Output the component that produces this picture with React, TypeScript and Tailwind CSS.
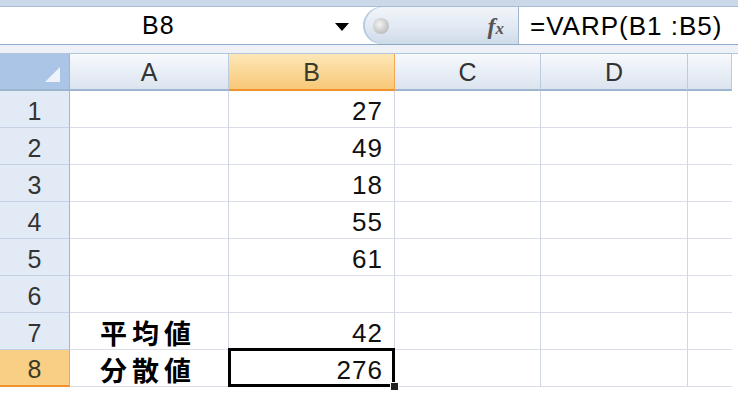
import React from "react";

const cols = ["A", "B", "C", "D", ""];
const colW = ["w-[159px]", "w-[166px]", "w-[146px]", "w-[147px]", "w-[44px]"];

const rows: { a?: string; b?: string }[] = [
  { b: "27" },
  { b: "49" },
  { b: "18" },
  { b: "55" },
  { b: "61" },
  {},
  { a: "平均値", b: "42" },
  { a: "分散値", b: "276" },
];

const font = { fontFamily: '"Liberation Sans", Arial, sans-serif' };

function FormulaBar() {
  return (
    <div className="flex h-[38px] border-b border-[#8fa9c9] bg-white">
      {/* name box */}
      <div className="relative flex w-[363px] items-center">
        <span className="ml-[142px] text-[25px] leading-none tracking-[1px] text-black">B8</span>
        <span className="absolute left-[335px] top-[16px] h-0 w-0 border-x-[7px] border-t-[8px] border-x-transparent border-t-black" />
      </div>
      {/* function buttons */}
      <div className="relative flex w-[156px] items-center rounded-l-full border-r border-[#9fb5cf] bg-gradient-to-b from-[#f1f5fa] via-[#e3eaf3] to-[#cfdbe9] shadow-[inset_2px_0_0_#b9cbe0]">
        <span className="ml-[10px] h-[16px] w-[16px] rounded-full bg-[radial-gradient(circle_at_40%_40%,#f4f4f4,#a9a9a9)]" />
        <span className="ml-auto mr-[14px] text-[24px] font-bold italic leading-none text-[#555]" style={{ fontFamily: '"Liberation Serif", serif' }}>
          f<span className="text-[17px]">x</span>
        </span>
      </div>
      {/* formula text */}
      <div className="flex flex-1 items-center pl-[11px]">
        <span className="text-[26px] leading-none tracking-[1px] text-black">=VARP(B1 :B5)</span>
      </div>
    </div>
  );
}

export default function App() {
  return (
    <div className="h-[412px] w-[738px] overflow-hidden bg-white" style={font}>
      <div className="h-[7px] border-b border-[#a7bcd6] bg-[#cbd8e8]" />
      <FormulaBar />
      <div className="h-[9px] border-b border-[#b2c4da] bg-[#eef2f8]" />

      {/* column headers */}
      <div className="flex h-[37px] w-[732px]">
        <div className="relative w-[70px] border-r border-b-2 border-[#9db5cf] bg-[#abc5e6]">
          <span className="absolute bottom-[7px] right-[9px] h-0 w-0 border-b-[15px] border-l-[15px] border-b-[#eef3fa] border-l-transparent" />
        </div>
        {cols.map((c, i) => (
          <div
            key={i}
            className={`${colW[i]} flex items-center justify-center border-r pt-[2px] text-[25px] leading-none ${
              c === "B"
                ? "border-b-2 border-r-[#f4a650] border-b-[#f0922e] bg-gradient-to-b from-[#fde7b6] to-[#f8c878] text-[#3a3a2a]"
                : "border-b-2 border-r-[#bccbe0] border-b-[#9db5cf] bg-gradient-to-b from-[#f7f9fc] to-[#dbe4ef] text-[#333]"
            }`}
          >
            {c}
          </div>
        ))}
      </div>

      {/* rows */}
      {rows.map((r, i) => {
        const sel = i === 7;
        return (
          <div key={i} className="flex h-[37px] w-[732px]">
            <div
              className={`flex w-[70px] items-center justify-center border-r pt-[4px] text-[25px] leading-none ${
                sel
                  ? "border-b-2 border-r-[#f4a650] border-b-[#f0922e] bg-[#f9cf86] text-[#3a3a2a]"
                  : "border-b border-r-[#9db5cf] border-b-[#c3d1e3] bg-[#e2eaf5] text-[#333]"
              }`}
            >
              {i + 1}
            </div>
            <div className="flex w-[159px] items-center border-r border-b border-r-[#d0d6e4] border-b-[#dadee8] pl-[30px] pt-[2px]">
              {r.a && (
                <span
                  className="text-[27px] font-bold leading-none tracking-[5px] text-black"
                  style={{ fontFamily: '"Noto Sans CJK JP", sans-serif' }}
                >
                  {r.a}
                </span>
              )}
            </div>
            <div className="relative flex w-[166px] items-center justify-end border-r border-b border-r-[#d0d6e4] border-b-[#dadee8] pr-[11px] pt-[4px] text-[26px] leading-none tracking-[1px] text-[#111]">
              {r.b}
              {sel && (
                <>
                  <span className="absolute inset-x-[-1px] top-[-2px] bottom-[-1px] border-[3px] border-black" />
                  <span className="absolute bottom-[-5px] right-[-5px] h-[9px] w-[9px] border border-white bg-[#222]" />
                </>
              )}
            </div>
            <div className="w-[146px] border-r border-b border-r-[#d0d6e4] border-b-[#dadee8]" />
            <div className="w-[147px] border-r border-b border-r-[#d0d6e4] border-b-[#dadee8]" />
            <div className="w-[44px] border-b border-b-[#dadee8]" />
          </div>
        );
      })}
    </div>
  );
}
